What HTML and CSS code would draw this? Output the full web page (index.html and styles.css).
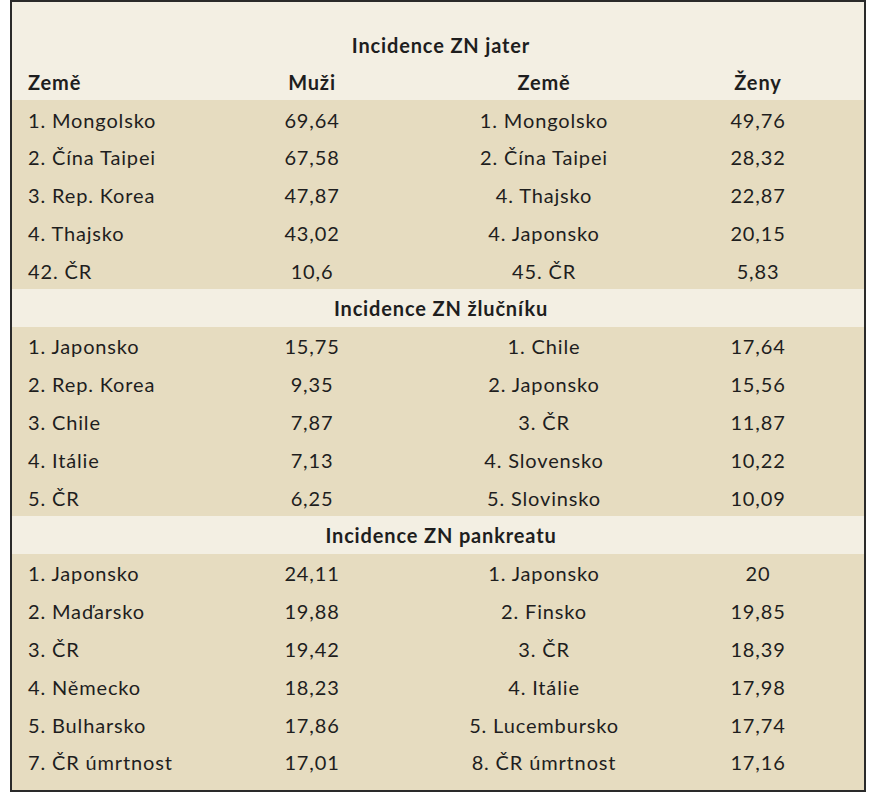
FILE: index.html
```html
<!DOCTYPE html>
<html lang="cs">
<head>
<meta charset="utf-8">
<link rel="stylesheet" href="styles.css">
</head>
<body>
<div class="table">
  <div class="title first">Incidence ZN jater</div>
  <div class="row head"><span class="c1">Země</span><span>Muži</span><span>Země</span><span>Ženy</span></div>
  <div class="band">
    <div class="row"><span class="c1">1. Mongolsko</span><span>69,64</span><span>1. Mongolsko</span><span>49,76</span></div>
    <div class="row"><span class="c1">2. Čína Taipei</span><span>67,58</span><span>2. Čína Taipei</span><span>28,32</span></div>
    <div class="row"><span class="c1">3. Rep. Korea</span><span>47,87</span><span>4. Thajsko</span><span>22,87</span></div>
    <div class="row"><span class="c1">4. Thajsko</span><span>43,02</span><span>4. Japonsko</span><span>20,15</span></div>
    <div class="row"><span class="c1">42. ČR</span><span>10,6</span><span>45. ČR</span><span>5,83</span></div>
  </div>
  <div class="title">Incidence ZN žlučníku</div>
  <div class="band">
    <div class="row"><span class="c1">1. Japonsko</span><span>15,75</span><span>1. Chile</span><span>17,64</span></div>
    <div class="row"><span class="c1">2. Rep. Korea</span><span>9,35</span><span>2. Japonsko</span><span>15,56</span></div>
    <div class="row"><span class="c1">3. Chile</span><span>7,87</span><span>3. ČR</span><span>11,87</span></div>
    <div class="row"><span class="c1">4. Itálie</span><span>7,13</span><span>4. Slovensko</span><span>10,22</span></div>
    <div class="row"><span class="c1">5. ČR</span><span>6,25</span><span>5. Slovinsko</span><span>10,09</span></div>
  </div>
  <div class="title">Incidence ZN pankreatu</div>
  <div class="band last">
    <div class="row"><span class="c1">1. Japonsko</span><span>24,11</span><span>1. Japonsko</span><span>20</span></div>
    <div class="row"><span class="c1">2. Maďarsko</span><span>19,88</span><span>2. Finsko</span><span>19,85</span></div>
    <div class="row"><span class="c1">3. ČR</span><span>19,42</span><span>3. ČR</span><span>18,39</span></div>
    <div class="row"><span class="c1">4. Německo</span><span>18,23</span><span>4. Itálie</span><span>17,98</span></div>
    <div class="row"><span class="c1">5. Bulharsko</span><span>17,86</span><span>5. Lucembursko</span><span>17,74</span></div>
    <div class="row"><span class="c1">7. ČR úmrtnost</span><span>17,01</span><span>8. ČR úmrtnost</span><span>17,16</span></div>
  </div>
</div>
</body>
</html>
```
FILE: styles.css
```css
html, body {
  margin: 0;
  padding: 0;
  background: #ffffff;
}
body {
  font-family: Lato, "Open Sans", sans-serif;
  font-size: 20px;
  letter-spacing: 0.85px;
  color: #1e1e1e;
}
.table {
  margin-left: 10px;
  width: 852px;
  border: 2px solid #2a2a2a;
  background: #f3efe3;
}
.title {
  height: 38px;
  line-height: 38px;
  text-align: center;
  font-weight: bold;
  padding-left: 6px;
}
.title.first {
  margin-top: 24px;
}
.row {
  display: grid;
  grid-template-columns: 219px 162px 302px 126px;
  height: 37.8px;
  box-sizing: border-box;
  padding-top: 1.5px;
  line-height: 36.3px;
}
.row span {
  text-align: center;
}
.row .c1 {
  text-align: left;
  padding-left: 16px;
}
.row.head {
  height: 36px;
  padding-top: 0;
  line-height: 36px;
  font-weight: bold;
}
.band {
  background: #e6dcc0;
}
.band.last {
  padding-bottom: 9px;
}
```
